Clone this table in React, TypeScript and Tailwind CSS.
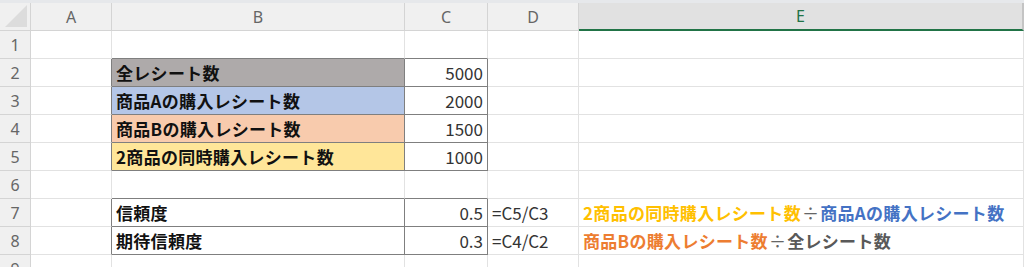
import type { ReactNode } from "react";

const COLS = [
  { key: "A", w: "w-[81px]" },
  { key: "B", w: "w-[293px]" },
  { key: "C", w: "w-[83px]" },
  { key: "D", w: "w-[91px]" },
  { key: "E", w: "flex-1" },
];

const jp = "font-['Noto_Sans_CJK_JP',sans-serif]";

// 枠線で囲まれた範囲（B2:C5 と B7:C8）
const boxed = (c: number, r: number) =>
  (c === 1 || c === 2) && ((r >= 2 && r <= 5) || r === 7 || r === 8);

type CellData = { node?: ReactNode; bg?: string; right?: boolean };

const label = (text: string, bg: string): CellData => ({
  node: <span className="font-bold tracking-[0.3px] text-[#111]">{text}</span>,
  bg,
});
const num = (v: string): CellData => ({ node: <span className="text-[#333]">{v}</span>, right: true });
const formula = (v: string): CellData => ({ node: <span className="text-[#333]">{v}</span> });

const divide = <span className="px-[1px] font-normal text-[#666]">÷</span>;

const rows: Record<number, Record<number, CellData>> = {
  2: { 1: label("全レシート数", "bg-[#aeaaaa]"), 2: num("5000") },
  3: { 1: label("商品Aの購入レシート数", "bg-[#b4c6e7]"), 2: num("2000") },
  4: { 1: label("商品Bの購入レシート数", "bg-[#f8cbad]"), 2: num("1500") },
  5: { 1: label("2商品の同時購入レシート数", "bg-[#ffe699]"), 2: num("1000") },
  7: {
    1: label("信頼度", "bg-white"),
    2: num("0.5"),
    3: formula("=C5/C3"),
    4: {
      node: (
        <span className="font-bold tracking-[0.3px]">
          <span className="text-[#ffc000]">2商品の同時購入レシート数</span>
          {divide}
          <span className="text-[#4472c4]">商品Aの購入レシート数</span>
        </span>
      ),
    },
  },
  8: {
    1: label("期待信頼度", "bg-white"),
    2: num("0.3"),
    3: formula("=C4/C2"),
    4: {
      node: (
        <span className="font-bold tracking-[0.3px]">
          <span className="text-[#ed7d31]">商品Bの購入レシート数</span>
          {divide}
          <span className="text-[#595959]">全レシート数</span>
        </span>
      ),
    },
  },
};

function HeaderRow() {
  return (
    <div className="flex h-[31px] border-t-[3px] border-[#e6e8eb]">
      <div className="relative w-[31px] shrink-0 border-r border-b border-[#d4d4d4] bg-[#f0f0f0]">
        <svg className="absolute right-[3px] bottom-[3px]" width="22" height="22" viewBox="0 0 22 22">
          <polygon points="22,0 22,22 0,22" fill="#dcdcdc" />
        </svg>
      </div>
      {COLS.map((c) =>
        c.key === "E" ? (
          <div
            key={c.key}
            className={`${c.w} flex items-center justify-center border-b-2 border-r-2 border-b-[#217346] border-r-[#c4c4c4] bg-[#e1e1e1] text-[16px] text-[#217346] font-['Noto_Sans',sans-serif]`}
          >
            {c.key}
          </div>
        ) : (
          <div
            key={c.key}
            className={`${c.w} shrink-0 flex items-center justify-center border-r border-b border-[#d4d4d4] bg-[#f0f0f0] text-[16px] text-[#666] font-['Noto_Sans',sans-serif]`}
          >
            {c.key}
          </div>
        )
      )}
    </div>
  );
}

function SheetRow({ r }: { r: number }) {
  const data = rows[r] ?? {};
  return (
    <div className="flex h-[28px]">
      <div className="w-[31px] shrink-0 flex items-center justify-center border-r border-b border-[#d4d4d4] bg-[#f0f0f0] text-[16px] text-[#666] font-['Noto_Sans',sans-serif]">
        {r}
      </div>
      {COLS.map((c, i) => {
        const cell = data[i];
        const darkR = boxed(i, r) || boxed(i + 1, r);
        const darkB = boxed(i, r) || boxed(i, r + 1);
        return (
          <div
            key={c.key}
            className={`${c.w} ${i < 4 ? "shrink-0" : ""} flex items-center overflow-visible whitespace-nowrap border-r border-b px-[4px] text-[17px] leading-none ${jp} ${
              darkR ? "border-r-[#7f7f7f]" : "border-r-[#e2e2e2]"
            } ${darkB ? "border-b-[#7f7f7f]" : "border-b-[#e2e2e2]"} ${cell?.bg ?? "bg-white"} ${
              cell?.right ? "justify-end" : "justify-start"
            }`}
          >
            {cell?.node}
          </div>
        );
      })}
    </div>
  );
}

export default function App() {
  return (
    <div className="h-[267px] w-[1024px] overflow-hidden bg-white">
      <HeaderRow />
      {[1, 2, 3, 4, 5, 6, 7, 8, 9].map((r) => (
        <SheetRow key={r} r={r} />
      ))}
    </div>
  );
}
